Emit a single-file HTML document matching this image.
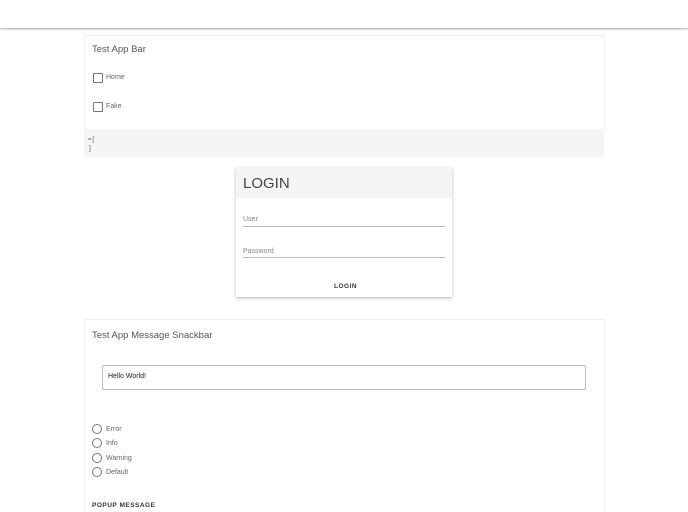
<!DOCTYPE html>
<html><head><style>
html,body{margin:0;width:688px;height:512px;overflow:hidden}
body{background:#fff;font-family:"Liberation Sans",sans-serif;position:relative;color:#333}
.a{position:absolute}
.cb{position:absolute;width:8px;height:8px;border:1.2px solid #777;border-radius:1px}
.rb{position:absolute;width:8px;height:8px;border:1.1px solid #777;border-radius:50%}
.l{position:absolute;font-size:7px;color:#666;line-height:9px}
</style></head><body>
<div class="a" style="left:0;top:0;width:688px;height:28px;background:#fff;box-shadow:0 1px 2px rgba(0,0,0,.35)"></div>
<div class="a" style="left:84px;top:35px;width:519px;height:93px;border:1px solid #eee"></div>
<div class="a" style="left:92px;top:44px;font-size:9.5px;color:#555">Test App Bar</div>
<div class="cb" style="left:93px;top:73px"></div><div class="l" style="left:106px;top:73px">Home</div>
<div class="cb" style="left:93px;top:102px"></div><div class="l" style="left:106px;top:102px">Fake</div>
<div class="a" style="left:84px;top:129px;width:520px;height:28px;background:#f5f5f5"></div>
<div class="a" style="left:88px;top:135px;font-size:6px;color:#555;line-height:9px;font-family:'Liberation Mono',monospace">=[<br>]</div>
<div class="a" style="left:236px;top:168px;width:216px;height:129px;background:#fff;box-shadow:0 1px 3px rgba(0,0,0,.3)"></div>
<div class="a" style="left:236px;top:168px;width:216px;height:30px;background:#f5f5f5"></div>
<div class="a" style="left:243px;top:175px;font-size:15px;color:#444">LOGIN</div>
<div class="l" style="left:243px;top:215px;color:#888">User</div>
<div class="a" style="left:243px;top:226px;width:202px;height:1px;background:#bbb"></div>
<div class="l" style="left:243px;top:247px;color:#888">Password</div>
<div class="a" style="left:243px;top:257px;width:202px;height:1px;background:#bbb"></div>
<div class="a" style="left:334px;top:283px;font-size:6.5px;font-weight:bold;letter-spacing:.5px;color:#333">LOGIN</div>
<div class="a" style="left:84px;top:319px;width:519px;height:200px;border:1px solid #eee;border-bottom:none"></div>
<div class="a" style="left:92px;top:330px;font-size:9.5px;color:#555">Test App Message Snackbar</div>
<div class="a" style="left:102px;top:365px;width:482px;height:23px;border:1px solid #bbb;border-radius:2px"></div>
<div class="a" style="left:108px;top:373px;font-size:7px;color:#222">Hello World!</div>
<div class="rb" style="left:92px;top:424px"></div><div class="l" style="left:106px;top:425px">Error</div>
<div class="rb" style="left:92px;top:438px"></div><div class="l" style="left:106px;top:439px">Info</div>
<div class="rb" style="left:92px;top:453px"></div><div class="l" style="left:106px;top:454px">Warning</div>
<div class="rb" style="left:92px;top:467px"></div><div class="l" style="left:106px;top:468px">Default</div>
<div class="a" style="left:92px;top:502px;font-size:6.5px;font-weight:bold;letter-spacing:.5px;color:#333">POPUP MESSAGE</div>
</body></html>
